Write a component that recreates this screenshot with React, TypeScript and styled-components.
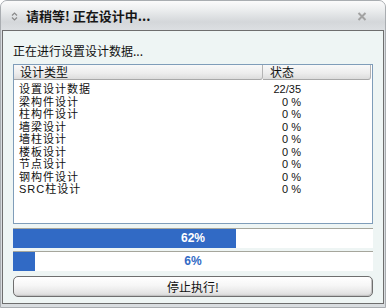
import React from "react";
import styled, { createGlobalStyle } from "styled-components";

const GlobalStyle = createGlobalStyle`
  html, body {
    margin: 0;
    padding: 0;
    background: #ffffff;
  }
  body {
    font-family: "Liberation Sans", "Noto Sans CJK SC", sans-serif;
    font-size: 12px;
  }
`;

const tasks = [
  { name: "设置设计数据", status: "22/35" },
  { name: "梁构件设计", status: "0 %" },
  { name: "柱构件设计", status: "0 %" },
  { name: "墙梁设计", status: "0 %" },
  { name: "墙柱设计", status: "0 %" },
  { name: "楼板设计", status: "0 %" },
  { name: "节点设计", status: "0 %" },
  { name: "钢构件设计", status: "0 %" },
  { name: "SRC柱设计", status: "0 %" },
];

const bars = [62, 6];

const App = () => {
  return (
    <>
      <GlobalStyle />
      <Window>
        <TitleBar>
          <TitleIcon width="7" height="9" viewBox="0 0 7 9">
            <path d="M1 3.5 L3.5 1 L6 3.5" fill="none" stroke="#8a8a8a" strokeWidth="1.2" />
            <path d="M1 5.5 L3.5 8 L6 5.5" fill="none" stroke="#8a8a8a" strokeWidth="1.2" />
          </TitleIcon>
          <Title>请稍等! 正在设计中...</Title>
          <CloseIcon width="10" height="9" viewBox="0 0 10 9">
            <path d="M1.5 1 L8.5 8 M8.5 1 L1.5 8" stroke="#a2a2a2" strokeWidth="2" />
          </CloseIcon>
        </TitleBar>

        <Body>
          <Message>正在进行设置设计数据...</Message>

          <ListBox>
            <HeaderRow>
              <HeaderCell>设计类型</HeaderCell>
              <HeaderCell $last>状态</HeaderCell>
            </HeaderRow>
            <Rows>
              {tasks.map((item, key) => (
                <Row key={key}>
                  <NameCell>{item.name}</NameCell>
                  <StatusCell>{item.status}</StatusCell>
                </Row>
              ))}
            </Rows>
          </ListBox>

          {bars.map((pct, key) => (
            <Bar key={key}>
              <BarFill style={{ width: `${pct}%` }} />
              <BarLabel $inverse={pct > 55}>{pct}%</BarLabel>
            </Bar>
          ))}

          <StopButton>停止执行!</StopButton>
        </Body>
      </Window>
    </>
  );
};

const Window = styled.div`
  width: 386px;
  height: 308px;
  box-sizing: border-box;
  display: flex;
  flex-direction: column;
  border: 1px solid #a9adb1;
  border-radius: 7px 7px 0 0;
  background: #d9dde0;
  overflow: hidden;
`;

const TitleBar = styled.div`
  height: 29px;
  flex: none;
  display: flex;
  align-items: center;
  padding: 0 18px 0 10px;
  background: linear-gradient(to bottom, #fbfbfb 0%, #eceeef 30%, #d4d7da 72%, #dcdfe2 100%);
`;

const TitleIcon = styled.svg`
  flex: none;
  margin-right: 8px;
  margin-top: 1px;
`;

const Title = styled.div`
  flex: 1;
  font-family: "Noto Sans CJK SC", sans-serif;
  font-weight: bold;
  font-size: 13px;
  line-height: 16px;
  color: #161616;
  margin-top: 1px;
`;

const CloseIcon = styled.svg`
  flex: none;
  margin-top: 2px;
`;

const Body = styled.div`
  flex: 1;
  margin: 0 1px 3px 1px;
  border: 1px solid #6e6e6e;
  background: #eef5f4;
  padding: 13px 10px 6px 10px;
  display: flex;
  flex-direction: column;
`;

const Message = styled.div`
  font-family: "Noto Sans CJK SC", sans-serif;
  font-size: 12px;
  line-height: 14px;
  color: #111;
  margin-bottom: 6px;
`;

const ListBox = styled.div`
  height: 160px;
  box-sizing: border-box;
  border: 1px solid #7f9db9;
  background: #ffffff;
  display: flex;
  flex-direction: column;
`;

const HeaderRow = styled.div`
  display: grid;
  grid-template-columns: 249px 1fr;
  height: 14px;
  padding-right: 1px;
`;

const HeaderCell = styled.div<{ $last?: boolean }>`
  font-family: "Noto Sans CJK SC", sans-serif;
  font-size: 12px;
  line-height: 14px;
  color: #111;
  padding-left: ${(p) => (p.$last ? "7px" : "6px")};
  background: linear-gradient(to bottom, #f9f9f9 0%, #ececec 60%, #dcdcdc 100%);
  border-bottom: 1px solid #a8a8a8;
  border-right: 1px solid #b4b4b4;
  border-radius: 0 0 3px 0;
  box-sizing: border-box;
`;

const Rows = styled.div`
  padding-top: 4px;
`;

const Row = styled.div`
  display: grid;
  grid-template-columns: 249px 38px;
  height: 12.5px;
  font-family: "Liberation Sans", "Noto Sans CJK SC", sans-serif;
  font-size: 11px;
  line-height: 12.5px;
  color: #111;
`;

const NameCell = styled.div`
  padding-left: 5px;
  letter-spacing: 1px;
  white-space: nowrap;
`;

const StatusCell = styled.div`
  text-align: right;
  white-space: nowrap;
`;

const Bar = styled.div`
  position: relative;
  height: 20px;
  box-sizing: border-box;
  margin-top: 4px;
  background: #ffffff;
  border-top: 1px solid #a6a69c;

  & + & {
    margin-top: 3px;
  }
`;

const BarFill = styled.div`
  height: 100%;
  background: #316ac5;
`;

const BarLabel = styled.div<{ $inverse?: boolean }>`
  position: absolute;
  inset: 0;
  text-align: center;
  font-family: "Liberation Sans", sans-serif;
  font-weight: bold;
  font-size: 12px;
  line-height: 19px;
  color: ${(p) => (p.$inverse ? "#ffffff" : "#316ac5")};
`;

const StopButton = styled.button`
  margin-top: 5px;
  height: 21px;
  padding: 0;
  border: 1px solid #6f6f6f;
  border-radius: 5px;
  background: linear-gradient(to bottom, #ffffff 0%, #f6f6f6 45%, #e4e4e4 85%, #d2d2d2 100%);
  box-shadow: inset -1px -1px 0 #c4c4c4;
  font-family: "Noto Sans CJK SC", sans-serif;
  font-size: 12px;
  line-height: 19px;
  color: #111;
  cursor: pointer;
`;

export default App;
